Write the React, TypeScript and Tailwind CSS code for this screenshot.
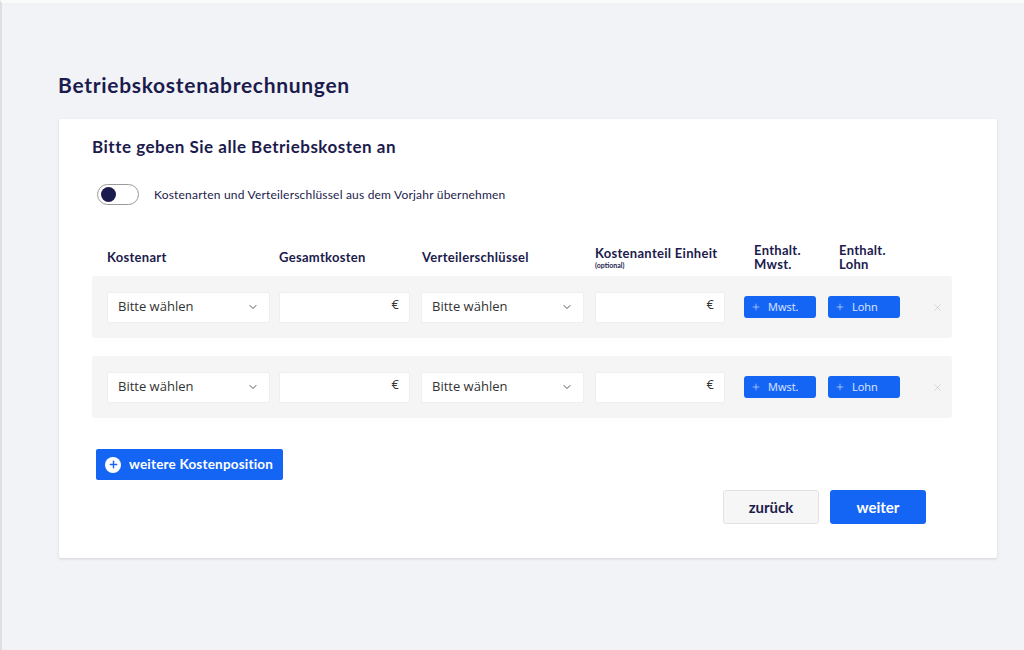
import { ChevronDown, Plus, X } from 'lucide-react'

const navy = 'text-[#1c1b4d]'

function SelectBox() {
  return (
    <div className="flex h-[31px] w-[163px] items-center justify-between rounded-[2px] border border-[#efefef] bg-white pl-[10px] pr-[10px] font-['Open_Sans'] text-[13px] text-[#333]">
      <span>Bitte wählen</span>
      <ChevronDown className="h-3 w-3 text-[#555]" strokeWidth={2} />
    </div>
  )
}

function EuroInput({ width }: { width: string }) {
  return (
    <div className={`flex h-[31px] ${width} items-center justify-end rounded-[2px] border border-[#efefef] bg-white pb-[4px] pr-[10px] font-['Open_Sans'] text-[13px] text-[#333]`}>
      €
    </div>
  )
}

function SmallButton({ label }: { label: string }) {
  return (
    <button className="flex h-[22px] w-[72px] items-center gap-[7px] rounded-[3px] bg-[#1565f5] pl-[7px] font-['Open_Sans'] text-[11px] text-white/85">
      <Plus className="h-[10px] w-[10px]" strokeWidth={1.5} />
      <span>{label}</span>
    </button>
  )
}

function CostRow() {
  return (
    <div className="flex h-[62px] items-center rounded-[3px] bg-[#f5f5f5] pl-[15px]">
      <SelectBox />
      <div className="ml-[9px]">
        <EuroInput width="w-[131px]" />
      </div>
      <div className="ml-[11px]">
        <SelectBox />
      </div>
      <div className="ml-[11px]">
        <EuroInput width="w-[130px]" />
      </div>
      <div className="ml-[19px]">
        <SmallButton label="Mwst." />
      </div>
      <div className="ml-[12px]">
        <SmallButton label="Lohn" />
      </div>
      <X className="ml-[32px] h-[11px] w-[11px] text-[#c8c8c8]" strokeWidth={1.5} />
    </div>
  )
}

export default function App() {
  return (
    <div className="h-[650px] w-[1024px] overflow-hidden border-l-2 border-t-[3px] border-l-[#dfdfe3] border-t-[#fafafa] bg-[#f2f3f7] font-['Lato',sans-serif]">
      <h1 className={`ml-[56px] mt-[68px] text-[21px] font-bold leading-[28px] tracking-[0.7px] ${navy}`}>
        Betriebskostenabrechnungen
      </h1>

      <div className="ml-[57px] mt-[20px] w-[938px] rounded-[2px] bg-white pb-[34px] pl-[33px] pr-[45px] pt-[17px] shadow-[0_1px_3px_rgba(0,0,0,0.13)]">
        <h2 className={`text-[17px] font-bold leading-[22px] tracking-[0.5px] ${navy}`}>
          Bitte geben Sie alle Betriebskosten an
        </h2>

        <div className="mt-[26px] flex items-center">
          <div className="ml-[5px] flex h-[21px] w-[42px] items-center rounded-full border border-[#9a9a9a] bg-white pl-[3px]">
            <div className="h-[15px] w-[15px] rounded-full bg-[#1c1b4d]" />
          </div>
          <span className={`ml-[15px] text-[12px] tracking-[0.2px] ${navy}`}>
            Kostenarten und Verteilerschlüssel aus dem Vorjahr übernehmen
          </span>
        </div>

        <div className={`mt-[33px] flex h-[38px] items-center pl-[15px] text-[13px] font-bold leading-[14px] tracking-[0.3px] ${navy}`}>
          <div className="w-[172px]">Kostenart</div>
          <div className="w-[143px]">Gesamtkosten</div>
          <div className="w-[173px]">Verteilerschlüssel</div>
          <div className="w-[159px]">
            <div>Kostenanteil Einheit</div>
            <div className="mt-[1px] text-[7px] leading-[8px] tracking-normal">(optional)</div>
          </div>
          <div className="flex w-[85px] flex-col">
            <span>Enthalt.</span>
            <span>Mwst.</span>
          </div>
          <div className="flex flex-col">
            <span>Enthalt.</span>
            <span>Lohn</span>
          </div>
        </div>

        <div className="flex flex-col gap-[18px]">
          <CostRow />
          <CostRow />
        </div>

        <button className="ml-[4px] mt-[31px] flex h-[31px] items-center gap-[8px] rounded-[2px] bg-[#1565f5] pl-[9px] pr-[10px] text-[13.5px] font-bold tracking-[0.2px] text-white">
          <span className="flex h-[16px] w-[16px] items-center justify-center rounded-full bg-white">
            <Plus className="h-[11px] w-[11px] text-[#1565f5]" strokeWidth={3} />
          </span>
          weitere Kostenposition
        </button>

        <div className="mt-[10px] flex justify-end gap-[11px] pr-[26px]">
          <button className={`h-[34px] w-[96px] rounded-[3px] border border-[#e2e2e2] bg-[#f6f6f6] text-[15px] font-bold ${navy}`}>
            zurück
          </button>
          <button className="h-[34px] w-[96px] rounded-[3px] bg-[#1565f5] text-[15px] font-bold text-white">
            weiter
          </button>
        </div>
      </div>
    </div>
  )
}
